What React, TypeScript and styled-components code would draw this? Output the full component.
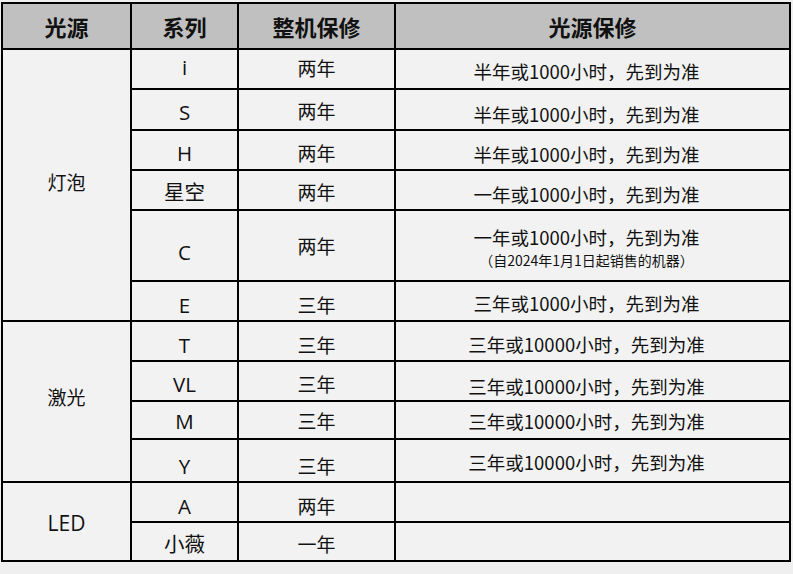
import React from "react";
import styled, { createGlobalStyle } from "styled-components";

const GlobalStyle = createGlobalStyle`
  html, body {
    margin: 0;
    padding: 0;
    background: #efefef;
  }
  body {
    font-family: "Noto Sans CJK SC", "Microsoft YaHei", "Noto Sans", sans-serif;
    color: #111;
  }
`;

const Page = styled.div`
  width: 793px;
  height: 574px;
  padding: 2px 0 0 1px;
  box-sizing: border-box;
  background: #efefef;
`;

const Grid = styled.div`
  display: inline-grid;
  grid-template-columns: 127px 105px 155px 393px;
  grid-template-rows: 44px 38px 39px 38px 38px 69px 38px 38px 38px 36px 41px 38px 37px;
  gap: 2px;
  padding: 2px;
  background: #000;
`;

const HeadCell = styled.div`
  background: #c0c0c0;
  display: flex;
  align-items: center;
  justify-content: center;
  font-size: 22px;
  font-weight: 700;
  color: #111;
  line-height: 1;
`;

const Cell = styled.div<{
  $span?: number;
  $padRight?: number;
  $nudge?: number;
  $size?: number;
  $latin?: boolean;
}>`
  background: #f2f2f2;
  display: flex;
  flex-direction: column;
  align-items: center;
  justify-content: center;
  font-family: ${(p) =>
    p.$latin
      ? `"Open Sans", "Noto Sans CJK SC", "Microsoft YaHei", sans-serif`
      : `"Noto Sans CJK SC", "Microsoft YaHei", "Noto Sans", sans-serif`};
  font-size: ${(p) => p.$size ?? 19}px;
  line-height: 1.2;
  color: #111;
  white-space: nowrap;
  padding-right: ${(p) => p.$padRight ?? 0}px;
  padding-top: ${(p) => Math.max(0, (p.$nudge ?? 0) * 2)}px;
  padding-bottom: ${(p) => Math.max(0, -(p.$nudge ?? 0) * 2)}px;
  grid-row: ${(p) => (p.$span ? `span ${p.$span}` : "auto")};
`;

const Note = styled.div`
  font-size: 14px;
  line-height: 1.2;
  margin-top: 4px;
`;

type Row = {
  series: string;
  whole: string;
  light: string;
  note?: string;
  nudge: [number, number, number];
};

type Group = { name: string; latin?: boolean; nudge: number; rows: Row[] };

const groups: Group[] = [
  {
    name: "灯泡",
    nudge: -3,
    rows: [
      { series: "i", whole: "两年", light: "半年或1000小时，先到为准", nudge: [-2, -1, 2] },
      { series: "S", whole: "两年", light: "半年或1000小时，先到为准", nudge: [3, 2, 5] },
      { series: "H", whole: "两年", light: "半年或1000小时，先到为准", nudge: [3, 3, 4] },
      { series: "星空", whole: "两年", light: "一年或1000小时，先到为准", nudge: [2, 2, 4] },
      {
        series: "C",
        whole: "两年",
        light: "一年或1000小时，先到为准",
        note: "（自2024年1月1日起销售的机器）",
        nudge: [7, 1, 1.5],
      },
      { series: "E", whole: "三年", light: "三年或1000小时，先到为准", nudge: [4, 4, 2] },
    ],
  },
  {
    name: "激光",
    nudge: -4,
    rows: [
      { series: "T", whole: "三年", light: "三年或10000小时，先到为准", nudge: [4, 4, 3] },
      { series: "VL", whole: "三年", light: "三年或10000小时，先到为准", nudge: [3, 3, 5] },
      { series: "M", whole: "三年", light: "三年或10000小时，先到为准", nudge: [1, 1, 1] },
      { series: "Y", whole: "三年", light: "三年或10000小时，先到为准", nudge: [6, 6, 2] },
    ],
  },
  {
    name: "LED",
    latin: true,
    nudge: 2,
    rows: [
      { series: "A", whole: "两年", light: "", nudge: [4, 4, 0] },
      { series: "小薇", whole: "一年", light: "", nudge: [3, 3, 0] },
    ],
  },
];

export default function App() {
  return (
    <>
      <GlobalStyle />
      <Page>
        <Grid>
          <HeadCell>光源</HeadCell>
          <HeadCell>系列</HeadCell>
          <HeadCell>整机保修</HeadCell>
          <HeadCell>光源保修</HeadCell>
          {groups.map((g) =>
            g.rows.map((r, i) => (
              <React.Fragment key={g.name + r.series}>
                {i === 0 && (
                  <Cell
                    $span={g.rows.length}
                    $latin={g.latin}
                    $size={g.latin ? 21 : 19}
                    $nudge={g.nudge}
                  >
                    {g.name}
                  </Cell>
                )}
                <Cell $latin $size={20.5} $nudge={r.nudge[0]}>
                  {r.series}
                </Cell>
                <Cell $nudge={r.nudge[1]}>{r.whole}</Cell>
                <Cell $size={18.5} $padRight={12} $nudge={r.nudge[2]}>
                  <div>{r.light}</div>
                  {r.note && <Note>{r.note}</Note>}
                </Cell>
              </React.Fragment>
            ))
          )}
        </Grid>
      </Page>
    </>
  );
}
